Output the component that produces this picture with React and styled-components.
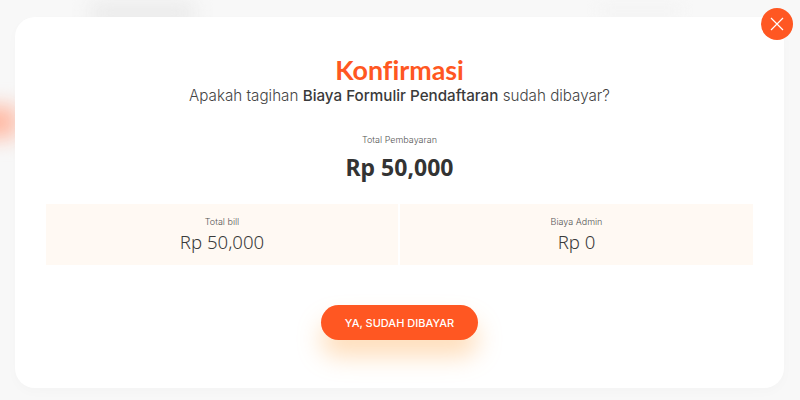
import styled, { createGlobalStyle } from "styled-components";

const GlobalStyle = createGlobalStyle`
  html, body {
    margin: 0;
    padding: 0;
    background: #f8f8f8;
  }
  * {
    box-sizing: border-box;
  }
`;

const Stage = styled.div`
  position: relative;
  width: 800px;
  height: 400px;
  overflow: hidden;
  background: #f8f8f8;
  padding: 17px 16px 12px 15px;
  font-family: "Inter", "Liberation Sans", sans-serif;
`;

// blurred page that shows through behind the dialog
const Blur = styled.div`
  position: absolute;
  left: ${(props) => props.x}px;
  top: ${(props) => props.y}px;
  width: ${(props) => props.w}px;
  height: ${(props) => props.h}px;
  background: ${(props) => props.color};
  filter: blur(${(props) => props.blur}px);
`;

const Modal = styled.div`
  position: relative;
  width: 769px;
  height: 371px;
  background: #fff;
  border-radius: 20px;
  padding: 38px 31px 0;
  display: flex;
  flex-direction: column;
  align-items: center;
  box-shadow: 0 4px 12px rgba(0, 0, 0, 0.02);
`;

const Title = styled.h1`
  margin: 0;
  font-family: "Lato", sans-serif;
  font-size: 26.8px;
  line-height: 30px;
  font-weight: 700;
  font-variant-ligatures: none;
  color: #ff5722;
`;

const Subtitle = styled.p`
  margin: 0;
  font-size: 15.2px;
  line-height: 22px;
  font-weight: 300;
  color: #444;

  b {
    font-weight: 500;
    color: #3a3a3a;
  }
`;

const TotalLabel = styled.div`
  margin-top: 27px;
  font-size: 9px;
  line-height: 12px;
  font-weight: 300;
  color: #555;
`;

const TotalValue = styled.div`
  margin-top: 4px;
  font-family: "Noto Sans", sans-serif;
  font-size: 23px;
  line-height: 34px;
  font-weight: 700;
  color: #333;
`;

const Breakdown = styled.div`
  margin-top: 20px;
  width: 707px;
  display: grid;
  grid-template-columns: 352px 353px;
  gap: 2px;
`;

const Cell = styled.div`
  height: 61px;
  padding-top: 10px;
  background: #fff9f3;
  text-align: center;
`;

const CellLabel = styled.div`
  font-size: 9px;
  line-height: 15px;
  font-weight: 300;
  color: #555;
`;

const CellValue = styled.div`
  font-family: "Noto Sans", sans-serif;
  font-size: 18.6px;
  line-height: 25px;
  font-weight: 300;
  color: #3a3a3a;
`;

const ConfirmButton = styled.button`
  margin-top: 40px;
  width: 157px;
  height: 35px;
  border: 0;
  border-radius: 18px;
  background: #ff5722;
  color: #fff;
  font-family: "Inter", sans-serif;
  font-size: 11px;
  font-weight: 500;
  box-shadow: 0 16px 24px rgba(255, 170, 80, 0.4);
`;

const CloseButton = styled.button`
  position: absolute;
  left: 761px;
  top: 8px;
  width: 32px;
  height: 32px;
  padding: 0;
  border: 0;
  border-radius: 50%;
  background: #ff5722;
  display: flex;
  align-items: center;
  justify-content: center;
`;

const Row = ({ label, value }) => (
  <Cell>
    <CellLabel>{label}</CellLabel>
    <CellValue>{value}</CellValue>
  </Cell>
);

export default function App() {
  return (
    <>
      <GlobalStyle />
      <Stage>
        <Blur x={90} y={4} w={105} h={18} color="#e8e8e8" blur={10} />
        <Blur x={600} y={6} w={80} h={10} color="#f3f3f3" blur={7} />
        <Blur x={-25} y={106} w={42} h={32} color="#ffb8a2" blur={10} />
        <Modal>
          <Title>Konfirmasi</Title>
          <Subtitle>
            Apakah tagihan <b>Biaya Formulir Pendaftaran</b> sudah dibayar?
          </Subtitle>
          <TotalLabel>Total Pembayaran</TotalLabel>
          <TotalValue>Rp 50,000</TotalValue>
          <Breakdown>
            <Row label="Total bill" value="Rp 50,000" />
            <Row label="Biaya Admin" value="Rp 0" />
          </Breakdown>
          <ConfirmButton>YA, SUDAH DIBAYAR</ConfirmButton>
        </Modal>
        <CloseButton aria-label="Tutup">
          <svg width="14" height="14" viewBox="0 0 14 14" fill="none" stroke="#fff" strokeWidth="1.2">
            <path d="M1 1 L13 13 M13 1 L1 13" />
          </svg>
        </CloseButton>
      </Stage>
    </>
  );
}
